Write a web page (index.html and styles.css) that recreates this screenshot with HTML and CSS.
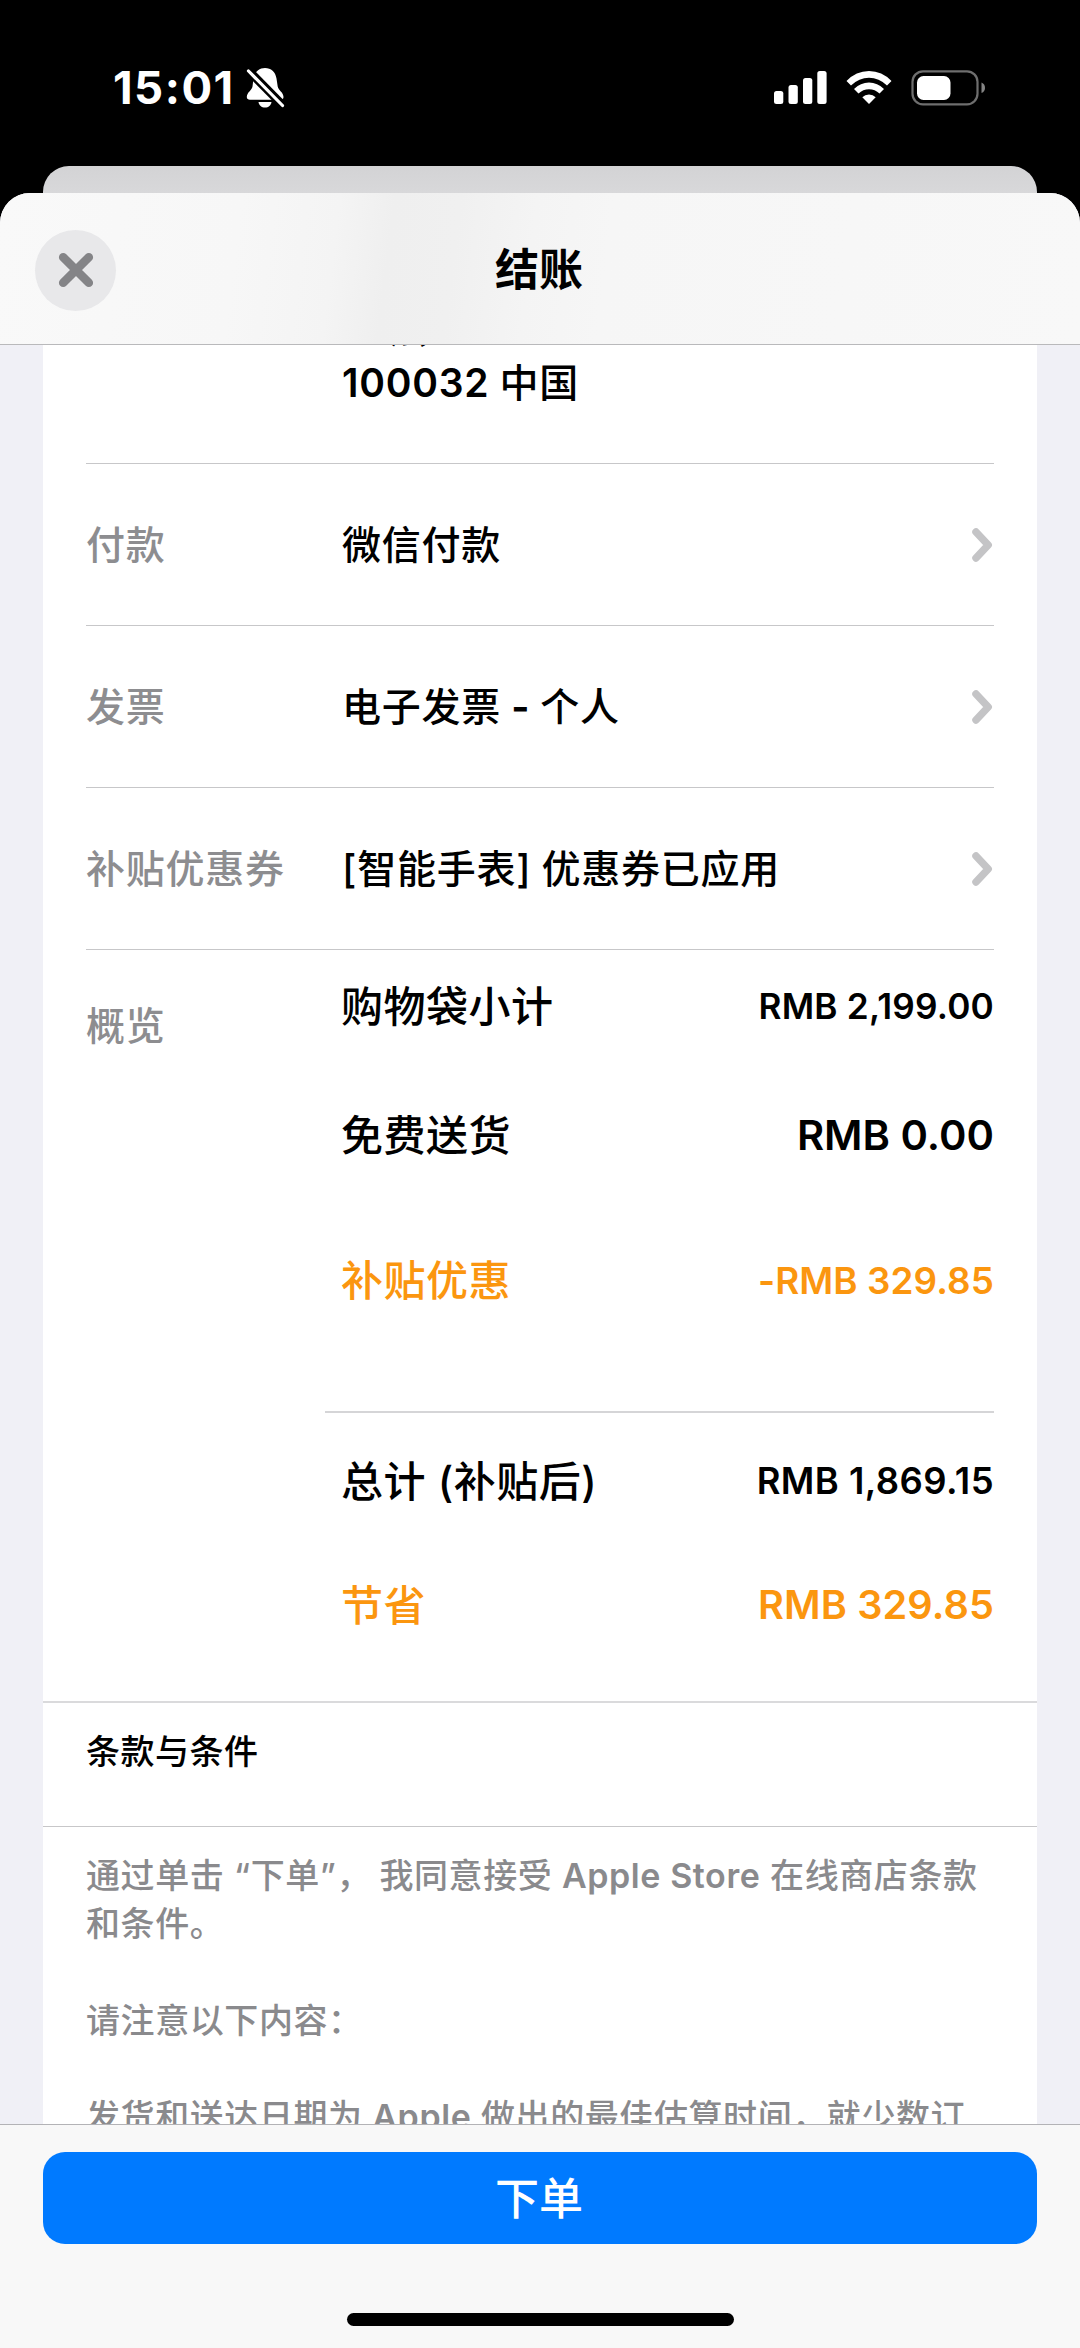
FILE: index.html
```html
<!DOCTYPE html>
<html lang="zh-CN">
<head>
<meta charset="utf-8">
<title>结账</title>
<link rel="stylesheet" href="styles.css">
</head>
<body>
<div class="phone">
  <div class="status">
    <div class="status-left">
      <span class="time">15:01</span>
      <svg class="bell" width="40" height="42" viewBox="0 0 40 42">
        <path fill="#fff" d="M20 1c6 0 10.500 4 11.500 10.500l1.200 8c.5 3.500 5.800 6 5.800 10.500 0 1.800-1.200 2.800-3 2.800H5c-2 0-3.200-1-3.200-2.800 0-4.500 5.200-7 5.700-10.500l1-8C9.500 5 14 1 20 1z"/>
        <path fill="#fff" d="M13.500 35h13c-.5 3.500-3 5.600-6.500 5.600S14 38.500 13.500 35z"/>
        <path stroke="#000" stroke-width="8.500" d="M2 2 40 40.500"/>
        <path stroke="#fff" stroke-width="3.200" stroke-linecap="round" d="M3.500 4 37.500 38.500"/>
      </svg>
    </div>
    <div class="status-right">
      <svg class="solid" width="54" height="36" viewBox="0 0 54 36">
        <rect x="1" y="21" width="9.300" height="13" rx="2.500"/>
        <rect x="15.500" y="15" width="9.300" height="19" rx="2.500"/>
        <rect x="30" y="8" width="9.300" height="26" rx="2.500"/>
        <rect x="44.300" y="1" width="9.300" height="33" rx="2.500"/>
      </svg>
      <svg class="solid wifi" width="46" height="36" viewBox="0 0 46 36">
        <path d="M23 34 16.300 27.300Q19 24.500 23 24.500T29.700 27.300z"/>
        <path d="M8 19Q14.500 12.500 23 12.500T38 19L33.500 23.600Q29 19.200 23 19.200T12.500 23.600z"/>
        <path d="M.5 11Q10 1 23 1T45.500 11L41 15.500Q33 7.700 23 7.700T5 15.500z"/>
      </svg>
      <svg class="battery" width="75" height="36" viewBox="0 0 75 36">
        <rect x="1.500" y="1.300" width="65" height="33" rx="10.500" fill="none" stroke="#6e6e6e" stroke-width="2.200"/>
        <rect x="6" y="6" width="33.500" height="24" rx="6.500" fill="#fff"/>
        <path fill="#858585" d="M70.500 12.500q3.500 1.500 3.500 5.300t-3.500 5.300z"/>
      </svg>
    </div>
  </div>
  <div class="back-sheet"></div>
  <div class="sheet">
    <header class="header">
      <button class="close" aria-label="关闭">
        <svg width="36" height="36" viewBox="0 0 36 36"><path stroke="#848487" stroke-width="8.600" stroke-linecap="round" d="M5.200 5.200 30.800 30.800M30.800 5.200 5.200 30.800"/></svg>
      </button>
      <h1 class="title">结账</h1>
    </header>
    <main class="content">
      <div class="card">
        <section class="row address">
          <div class="label"></div>
          <div class="value"><span class="addr-line street">一 法</span><span class="addr-line"><span class="latin">100032</span> 中国</span></div>
        </section>
        <section class="row">
          <div class="label">付款</div>
          <div class="value">微信付款</div>
          <svg class="chevron" width="22" height="36" viewBox="0 0 22 36"><path d="M5 5 17.200 18 5 31"/></svg>
        </section>
        <section class="row">
          <div class="label">发票</div>
          <div class="value">电子发票 <span class="dash">-</span> 个人</div>
          <svg class="chevron" width="22" height="36" viewBox="0 0 22 36"><path d="M5 5 17.200 18 5 31"/></svg>
        </section>
        <section class="row">
          <div class="label">补贴优惠券</div>
          <div class="value">[智能手表] 优惠券已应用</div>
          <svg class="chevron" width="22" height="36" viewBox="0 0 22 36"><path d="M5 5 17.200 18 5 31"/></svg>
        </section>
        <section class="summary">
          <div class="label summary-label">概览</div>
          <div class="lines">
            <div class="line subtotal"><span>购物袋小计</span><span class="amount">RMB 2,199.00</span></div>
            <div class="line shipping"><span>免费送货</span><span class="amount">RMB 0.00</span></div>
            <div class="line discount"><span>补贴优惠</span><span class="amount">-RMB 329.85</span></div>
            <div class="line total"><span>总计 (补贴后)</span><span class="amount">RMB 1,869.15</span></div>
            <div class="line saving"><span>节省</span><span class="amount">RMB 329.85</span></div>
          </div>
        </section>
        <h2 class="terms-title">条款与条件</h2>
        <div class="terms">
          <p>通过单击 “下单”<span class="comma">，</span>我同意接受 <span class="latin">Apple Store</span> 在线商店条款<br>和条件。</p>
          <p>请注意以下内容：</p>
          <p>发货和送达日期为 <span class="latin">Apple</span> 做出的最佳估算时间，就少数订</p>
        </div>
      </div>
    </main>
    <footer class="footer">
      <button class="order">下单</button>
      <div class="home"></div>
    </footer>
  </div>
</div>
</body>
</html>
```
FILE: styles.css
```css
* { box-sizing: border-box; margin: 0; padding: 0; }

body {
  width: 1080px;
  height: 2348px;
  overflow: hidden;
  background: #000;
  color: #000;
  font-family: Inter, "Noto Sans CJK SC", sans-serif;
  font-weight: 500;
}

button { border: 0; font: inherit; }
svg { display: block; fill: none; flex: none; }
.solid { fill: #fff; }
.latin { font-weight: 600; }
.dash { font-weight: 700; }

.phone { display: flex; flex-direction: column; height: 2348px; }

.status {
  display: flex;
  justify-content: space-between;
  flex: none;
  height: 166px;
  padding: 66px 94px 0 113px;
}
.status-left, .status-right { display: flex; }
.time {
  width: 132px;
  color: #fff;
  font-size: 45.5px;
  font-weight: 700;
  line-height: 44px;
  letter-spacing: 1.5px;
}
.bell { margin-top: 1px; }
.status-right { padding-top: 4px; }
.wifi { margin-left: 19px; }
.battery { margin-left: 19px; }

.back-sheet {
  flex: none;
  height: 27px;
  margin: 0 43px;
  border-radius: 26px 26px 0 0;
  background: linear-gradient(#d3d3d5, #d8d8da);
}

.sheet {
  display: flex;
  flex: 1;
  flex-direction: column;
  min-height: 0;
  overflow: hidden;
  border-radius: 30px 30px 0 0;
  background: #f0f0f6;
}

.header {
  display: grid;
  grid-template-columns: 81px 1fr 81px;
  align-items: center;
  flex: none;
  height: 152px;
  padding: 3px 36px 0 35px;
  border-bottom: 1px solid #b9b9bb;
  background: linear-gradient(97deg, #f9f9f9 0, #f7f7f7 22%, #f4f4f4 31%, #efefef 36%, #f0f0f0 42%, #f4f4f4 49%, #f6f6f6 56%, #f8f8f8 100%);
}
.close {
  display: grid;
  place-items: center;
  width: 81px;
  height: 81px;
  border-radius: 50%;
  background: #e8e8ea;
}
.title { padding-right: 1px; font-size: 44px; font-weight: 700; line-height: 60px; text-align: center; }

.content { flex: none; height: 1779px; overflow: hidden; padding: 0 43px; }
.card { height: 1900px; background: #fff; }

.row {
  display: flex;
  align-items: center;
  height: 162px;
  margin: 0 43px;
  border-bottom: 1px solid #c7c7c9;
  font-size: 39px;
  letter-spacing: 0.75px;
}
.row .label, .row .value { padding-bottom: 5px; }
.label { flex: none; width: 256px; color: #8d8d90; }
.value { flex: 1; white-space: nowrap; word-spacing: -1px; }
.address { height: 119px; align-items: flex-start; }
.address .value { margin-top: -43px; }
.addr-line { display: block; line-height: 54px; }
.street { word-spacing: -5px; }
.chevron { margin-right: 1px; }
.chevron path {
  stroke: #c4c4c6;
  stroke-width: 7.5;
  stroke-linecap: round;
  stroke-linejoin: round;
}

.summary { display: flex; height: 753px; padding-left: 43px; border-bottom: 2px solid #dadadc; }
.summary-label { width: 239px; padding-top: 47px; font-size: 39px; line-height: 58px; letter-spacing: 0.75px; }
.lines { display: flex; flex: 1; flex-direction: column; padding-right: 43px; }
.line {
  display: flex;
  align-items: center;
  justify-content: space-between;
  padding: 0 0 0 16px;
  font-size: 42px;
  letter-spacing: 0.5px;
  line-height: 60px;
}
.amount { padding-bottom: 1px; font-weight: 600; line-height: 59px; letter-spacing: 0; }
.subtotal { margin-top: 27px; }
.subtotal .amount { font-size: 35.2px; letter-spacing: 0.2px; }
.shipping { margin-top: 69px; }
.shipping .amount { font-size: 41.7px; }
.discount { height: 192px; margin-top: 55px; padding-bottom: 70px; border-bottom: 2px solid #d5d5d7; color: #fb960f; }
.discount .amount { font-size: 36.8px; letter-spacing: 0.1px; }
.total { margin-top: 39px; }
.total .amount { font-size: 36.4px; letter-spacing: 0.45px; }
.saving { margin-top: 64px; color: #fb960f; }
.saving .amount { font-size: 39.7px; letter-spacing: 0.1px; }

.terms-title {
  height: 124px;
  padding: 24px 43px 0;
  border-bottom: 1px solid #c7c7c9;
  font-size: 34px;
  font-weight: 500;
  line-height: 50px;
  letter-spacing: 0.5px;
}
.terms { padding: 25px 43px 0; color: #8a8a8d; font-size: 34px; line-height: 48.3px; letter-spacing: 0.58px; white-space: nowrap; }
.terms p { margin-bottom: 48.3px; }
.comma { display: inline-block; width: 43px; }

.footer {
  display: flex;
  flex: 1;
  flex-direction: column;
  align-items: center;
  padding-top: 27px;
  border-top: 1px solid #b3b3b6;
  background: #f8f8f8;
}
.order {
  width: 994px;
  height: 92px;
  padding: 1px 2px 0 0;
  border-radius: 22px;
  background: #007aff;
  color: #fff;
  font-size: 44px;
  line-height: 60px;
}
.home { width: 387px; height: 13px; margin-top: 69px; border-radius: 7px; background: #000; }
```
